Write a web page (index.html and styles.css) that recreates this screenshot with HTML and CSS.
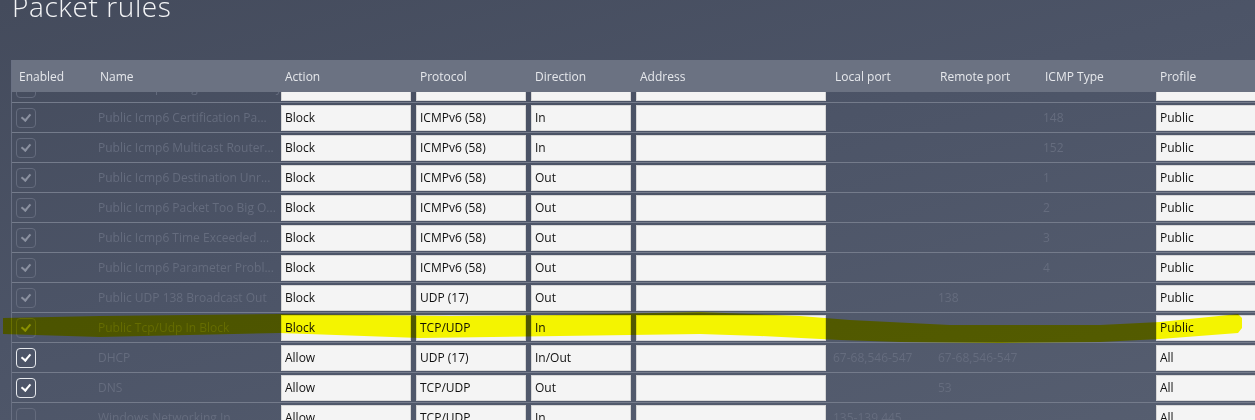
FILE: index.html
```html
<!DOCTYPE html>
<html>
<head lang="en">
    <meta charset="utf-8">
    <title>Packet rules</title>
    <link rel="stylesheet" href="styles.css">
</head>
<body>

<div class="page">
    <h1 class="pageTitle">Packet rules</h1>

    <div class="rulesTable">
        <div class="rulesHead">
            <span>Enabled</span>
            <span>Name</span>
            <span>Action</span>
            <span>Protocol</span>
            <span>Direction</span>
            <span>Address</span>
            <span>Local port</span>
            <span>Remote port</span>
            <span>ICMP Type</span>
            <span>Profile</span>
        </div>

        <div class="rulesBody">
            <!-- scrolled: first row sits under the header -->
            <div class="ruleRow first">
                <span class="chk"></span>
                <span class="name">Public Icmp6 Neighbor Discovery Ad...</span>
                <span class="field"></span>
                <span class="field"></span>
                <span class="field"></span>
                <span class="field"></span>
                <span class="plain"></span>
                <span class="plain"></span>
                <span class="plain"></span>
                <span class="field"></span>
            </div>
            <div class="ruleRow">
                <span class="chk"></span>
                <span class="name">Public Icmp6 Certification Pa...</span>
                <span class="field">Block</span>
                <span class="field">ICMPv6 (58)</span>
                <span class="field">In</span>
                <span class="field"></span>
                <span class="plain"></span>
                <span class="plain"></span>
                <span class="plain">148</span>
                <span class="field">Public</span>
            </div>
            <div class="ruleRow">
                <span class="chk"></span>
                <span class="name">Public Icmp6 Multicast Router...</span>
                <span class="field">Block</span>
                <span class="field">ICMPv6 (58)</span>
                <span class="field">In</span>
                <span class="field"></span>
                <span class="plain"></span>
                <span class="plain"></span>
                <span class="plain">152</span>
                <span class="field">Public</span>
            </div>
            <div class="ruleRow">
                <span class="chk"></span>
                <span class="name">Public Icmp6 Destination Unr...</span>
                <span class="field">Block</span>
                <span class="field">ICMPv6 (58)</span>
                <span class="field">Out</span>
                <span class="field"></span>
                <span class="plain"></span>
                <span class="plain"></span>
                <span class="plain">1</span>
                <span class="field">Public</span>
            </div>
            <div class="ruleRow">
                <span class="chk"></span>
                <span class="name">Public Icmp6 Packet Too Big O...</span>
                <span class="field">Block</span>
                <span class="field">ICMPv6 (58)</span>
                <span class="field">Out</span>
                <span class="field"></span>
                <span class="plain"></span>
                <span class="plain"></span>
                <span class="plain">2</span>
                <span class="field">Public</span>
            </div>
            <div class="ruleRow">
                <span class="chk"></span>
                <span class="name">Public Icmp6 Time Exceeded ...</span>
                <span class="field">Block</span>
                <span class="field">ICMPv6 (58)</span>
                <span class="field">Out</span>
                <span class="field"></span>
                <span class="plain"></span>
                <span class="plain"></span>
                <span class="plain">3</span>
                <span class="field">Public</span>
            </div>
            <div class="ruleRow">
                <span class="chk"></span>
                <span class="name">Public Icmp6 Parameter Probl...</span>
                <span class="field">Block</span>
                <span class="field">ICMPv6 (58)</span>
                <span class="field">Out</span>
                <span class="field"></span>
                <span class="plain"></span>
                <span class="plain"></span>
                <span class="plain">4</span>
                <span class="field">Public</span>
            </div>
            <div class="ruleRow">
                <span class="chk"></span>
                <span class="name">Public UDP 138 Broadcast Out</span>
                <span class="field">Block</span>
                <span class="field">UDP (17)</span>
                <span class="field">Out</span>
                <span class="field"></span>
                <span class="plain"></span>
                <span class="plain">138</span>
                <span class="plain"></span>
                <span class="field">Public</span>
            </div>
            <div class="ruleRow">
                <span class="chk"></span>
                <span class="name">Public Tcp/Udp In Block</span>
                <span class="field">Block</span>
                <span class="field">TCP/UDP</span>
                <span class="field">In</span>
                <span class="field"></span>
                <span class="plain"></span>
                <span class="plain"></span>
                <span class="plain"></span>
                <span class="field">Public</span>
            </div>
            <div class="ruleRow">
                <span class="chk on"></span>
                <span class="name">DHCP</span>
                <span class="field">Allow</span>
                <span class="field">UDP (17)</span>
                <span class="field">In/Out</span>
                <span class="field"></span>
                <span class="plain">67-68,546-547</span>
                <span class="plain">67-68,546-547</span>
                <span class="plain"></span>
                <span class="field">All</span>
            </div>
            <div class="ruleRow">
                <span class="chk on"></span>
                <span class="name">DNS</span>
                <span class="field">Allow</span>
                <span class="field">TCP/UDP</span>
                <span class="field">Out</span>
                <span class="field"></span>
                <span class="plain"></span>
                <span class="plain">53</span>
                <span class="plain"></span>
                <span class="field">All</span>
            </div>
            <div class="ruleRow">
                <span class="chk off"></span>
                <span class="name">Windows Networking In</span>
                <span class="field">Allow</span>
                <span class="field">TCP/UDP</span>
                <span class="field">In</span>
                <span class="field"></span>
                <span class="plain">135-139,445</span>
                <span class="plain"></span>
                <span class="plain"></span>
                <span class="field">All</span>
            </div>
        </div>
    </div>
</div>

<!-- marker stroke drawn over the screenshot -->
<svg class="marker" width="1255" height="420" viewBox="0 0 1255 420">
    <path d="M3,318 L100,316 L280,314 L450,316 L560,315 L700,312 L800,316 L850,320 L950,325 L1100,325 L1160,322 L1238,314 L1242,318 L1242,328 L1238,333 L1160,339 L1100,342 L1000,343 L900,342 L840,340 L760,336 L700,334 L560,336 L420,338 L280,333 L100,337 L3,334 Z"/>
</svg>

</body>
</html>
```

FILE: styles.css
```css
html, body {
	margin: 0;
	height: 100%;
	overflow: hidden;
}

body {
	background: linear-gradient(165deg, #444b5c 0%, #4c5467 45%, #565e70 100%);
	font-family: "Open Sans", "Noto Sans", sans-serif;
	font-size: 12px;
	color: #e6e8ec;
	position: relative;
}

.page {
	padding-left: 11px;
}

.pageTitle {
	margin: -9px 0 39px 1px;
	height: 30px;
	line-height: 30px;
	font-size: 28px;
	font-weight: 300;
	letter-spacing: 0.6px;
	color: #f2f3f5;
}

.rulesTable {
	border-left: 1px solid #697083;
}

.rulesHead,
.ruleRow {
	display: grid;
	grid-template-columns: 83px 185px 135px 115px 105px 195px 105px 105px 115px 150px;
	align-items: center;
}

.rulesHead {
	position: relative;
	z-index: 2;
	height: 32px;
	background: #6b7282;
}

.rulesHead span {
	padding-left: 5px;
	white-space: nowrap;
}

.rulesHead span:first-child {
	padding-left: 7px;
}

.rulesBody {
	height: 328px;
	overflow: hidden;
}

.ruleRow {
	height: 29px;
	border-bottom: 1px solid #747b8b;
}

.ruleRow.first {
	margin-top: -19px;
}

.chk {
	width: 18px;
	height: 18px;
	margin-left: 4px;
	border: 1px solid #646b7d;
	border-radius: 4px;
	position: relative;
}

.chk::after {
	content: "";
	position: absolute;
	left: 6px;
	top: 3px;
	width: 4px;
	height: 7px;
	border-right: 2px solid #8b91a0;
	border-bottom: 2px solid #8b91a0;
	transform: rotate(40deg);
}

.chk.on {
	border-color: #e8eaee;
}

.chk.on::after {
	border-color: #ffffff;
}

.chk.off::after {
	display: none;
}

.name {
	padding-left: 3px;
	color: #656c7e;
	white-space: nowrap;
	overflow: hidden;
}

.plain {
	padding-left: 3px;
	color: #656c7e;
	white-space: nowrap;
}

.field {
	box-sizing: border-box;
	height: 26px;
	line-height: 24px;
	margin-left: 1px;
	margin-right: 4px;
	padding-left: 3px;
	background: #f4f4f4;
	border: 1px solid #d6d6d6;
	color: #111111;
	white-space: nowrap;
}

.ruleRow .field:last-child {
	margin-right: 0;
}

.marker {
	position: absolute;
	left: 0;
	top: 0;
	z-index: 5;
	mix-blend-mode: multiply;
	pointer-events: none;
}

.marker path {
	fill: #ffff00;
}
```
